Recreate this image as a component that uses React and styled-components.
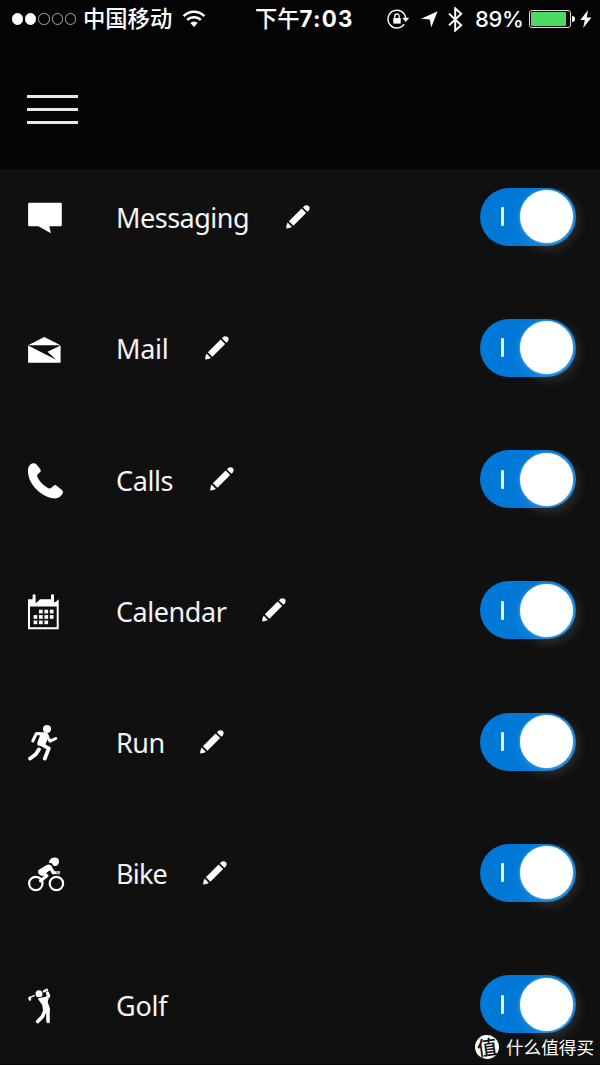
import React from "react";
import styled, { createGlobalStyle } from "styled-components";

const tiles = [
  { name: "Messaging", width: 133, spacing: -0.5, icon: <MessageIcon /> },
  { name: "Mail", width: 52, spacing: -0.3, icon: <MailIcon /> },
  { name: "Calls", width: 57, spacing: -0.4, icon: <PhoneIcon /> },
  { name: "Calendar", width: 109, spacing: -0.45, icon: <CalendarIcon /> },
  { name: "Run", width: 47, spacing: -0.5, icon: <RunIcon /> },
  { name: "Bike", width: 50, spacing: -0.8, icon: <BikeIcon /> },
  { name: "Golf", width: 52, spacing: -0.2, icon: <GolfIcon />, fixed: true },
];

function App() {
  return (
    <StPage>
      <GlobalStyle />
      <StHeader>
        <StatusBar />
        <StMenuBtn aria-label="menu">
          <StMenuLine />
          <StMenuLine />
          <StMenuLine />
        </StMenuBtn>
      </StHeader>
      <StList>
        {tiles.map((tile) => {
          return (
            <StRow key={tile.name}>
              {tile.icon}
              <StLabel $width={tile.width} $spacing={tile.spacing}>
                {tile.name}
              </StLabel>
              {!tile.fixed && <PencilIcon />}
              <StToggle role="switch" aria-checked="true">
                <StToggleBar />
                <StKnob />
              </StToggle>
            </StRow>
          );
        })}
      </StList>
      <StWatermark>
        <StBadge>值</StBadge>
        什么值得买
      </StWatermark>
    </StPage>
  );
}

export default App;

function StatusBar() {
  return (
    <StStatus>
      <StSignal>
        <StDot $on />
        <StDot $on />
        <StDot />
        <StDot />
        <StDot />
      </StSignal>
      <StCarrier>中国移动</StCarrier>
      <StWifi viewBox="0 0 24 18">
        <path d="M1.6 6.2a14.6 14.6 0 0 1 20.8 0" />
        <path d="M5.2 10a9.5 9.5 0 0 1 13.6 0" />
        <path d="M8.3 13a5.3 5.3 0 0 1 7.4 0L12 17z" fill="#fff" stroke="none" />
      </StWifi>
      <StTime>
        下午<StClock>7:03</StClock>
      </StTime>
      <StStatusIcons>
        <svg width="23" height="20" viewBox="0 0 23 20" fill="none">
          <path d="M17.2 15.2A8.9 8.9 0 1 1 18.7 9" stroke="#fff" strokeWidth="1.4" />
          <path d="M15.2 8.8h7l-3.5 4.2z" fill="#fff" />
          <path d="M6.3 9h7.4v5.6H6.3z" fill="#fff" />
          <path d="M7.8 9V7.2a2.2 2.2 0 0 1 4.4 0V9" stroke="#fff" strokeWidth="1.3" />
        </svg>
        <svg width="17" height="17" viewBox="0 0 17 17">
          <path d="M16.6.3 10.2 16.6 8.8 8.6.2 7.8z" fill="#fff" />
        </svg>
        <svg width="15" height="25" viewBox="0 0 15 25" fill="none">
          <path d="m1 6.6 12.2 11.6-6 5.4V1.4l6 5.4L1 18.4" stroke="#fff" strokeWidth="2" />
        </svg>
      </StStatusIcons>
      <StPercent>89%</StPercent>
      <StBattery>
        <StCharge />
      </StBattery>
      <StBatteryTip />
      <svg width="12" height="18" viewBox="0 0 12 18">
        <path d="M8 0 .4 10h4.4L3.2 18 11.4 7.4H6.8z" fill="#fff" />
      </svg>
    </StStatus>
  );
}

function PencilIcon() {
  return (
    <StPencil viewBox="0 0 24 24">
      <path d="m15.6 3.6 4.5 4.5L7.4 20.8l-4.5-4.5z" />
      <path d="m17 2.4 1.2-1.3q1-.9 2.5-.7h1q1.8.3 1.9 2.2 0 2-.8 2.8l-1.4 1.4z" />
      <path d="m1.6 17.6 4.3 4.3-2.6 1.1-3.1.6.3-3.1z" />
    </StPencil>
  );
}

function MessageIcon() {
  return (
    <StIcon viewBox="0 0 40 40">
      <path d="M1.5 5.7h31q1.3 0 1.3 1.4v20.8q0 1.4-1.3 1.4H21.3l1.6 6.9-12.6-6.9H1.5Q.1 29.3.1 27.9V7.1q0-1.4 1.4-1.4z" />
    </StIcon>
  );
}

function MailIcon() {
  return (
    <StIcon viewBox="0 0 40 40">
      <path d="M.1 17.2 16.3 9l16.3 8.2z" />
      <path d="M.1 17.6 28.2 31.8l-8.7-8 13.1-6.4v17.4H.1z" />
    </StIcon>
  );
}

function PhoneIcon() {
  return (
    <StIcon viewBox="0 0 40 40">
      <path d="M5.3 3.2q1.7-.3 3.2 1.4l3.7 4.5q1.2 1.5.1 2.8l-2.1 1.8q-1.7 1.3-.9 3.1c2 4.4 5.7 8.5 10.2 11 1.7.9 2.9.8 4.1-.3l2-1.8q1.5-1.2 3 0l5.4 4.3q1.5 1.3.8 3-2.4 5.4-7.8 5.4C14.8 38.4 0 24.8 0 11.3 0 7 1.4 3.8 5.3 3.2z" />
    </StIcon>
  );
}

function CalendarIcon() {
  const dots = [
    [11, 18.7], [16.4, 18.7], [21.8, 18.7],
    [5.6, 24.1], [11, 24.1], [16.4, 24.1], [21.8, 24.1],
    [5.6, 29.5], [11, 29.5], [16.4, 29.5],
  ];
  return (
    <StIcon viewBox="0 0 40 40">
      <path
        fillRule="evenodd"
        d="M0 8.3h4.6V4.5q0-1.2 1.5-1.2t1.5 1.2v7.3h.8l3.7-3.5H23V4.5q0-1.2 1.5-1.2T26 4.5v6.7l1.6-.3 3.1-2.6v30H0zM2 15.5v20.7h26.7V15.5z"
      />
      {dots.map(([x, y]) => (
        <rect key={x + "-" + y} x={x} y={y} width="3.7" height="3.7" />
      ))}
    </StIcon>
  );
}

function RunIcon() {
  return (
    <StIcon viewBox="0 0 40 40">
      <circle cx="19" cy="7" r="4" />
      <path d="M7.5 10.2h9.8q3 .6 3.6 3.6l-3 7.4-1 3-7.2-.6q-1.2-2 .1-4.3l2.3-5.8z" />
      <StLimb $w={3} d="M12 11.8H8.2L4.8 19M18.5 13.2l3.6 6 5.7-2.7" />
      <StLimb $w={3.8} d="m13.5 22.4 7.3 4-4 10.2M11 27.4l-3.2 4.9-5.7 4.2" />
    </StIcon>
  );
}

function BikeIcon() {
  return (
    <StIcon viewBox="0 0 40 40">
      <StLimb $w={2.2} d="M14.5 30.5a6.7 6.7 0 1 1-13.4 0 6.7 6.7 0 1 1 13.4 0zM35.1 30.5a6.7 6.7 0 1 1-13.4 0 6.7 6.7 0 1 1 13.4 0z" />
      <path d="M20.8 9.5C21.6 5.4 25 4 28.2 4.7q3 .8 2.8 3.7c-.1 3-1.8 4.8-4 4.6-1.6 0-2.4-1.2-2.8-2.6z" />
      <path d="m10.2 17.3 8.4-5.2q3-1.6 5 1.1l.7 2.2-6 4.7-4.3 2.8q-4.8-1.5-3.8-5.6z" />
      <StLimb $w={3.4} d="m22 14 3.3 5.6h1.4M13 19.5l5.8 3.2-6.2 5" />
      <path d="M28.4 18h1.2v3.2h-1.2zM30.3 18h1.4v3.2h-1.4z" />
    </StIcon>
  );
}

function GolfIcon() {
  return (
    <StIcon viewBox="0 0 40 40">
      <circle cx="11" cy="8.8" r="3.5" />
      <StLimb $w={1.4} d="m1.7 12.7 4.5-2" />
      <StLimb $w={2.6} d="m1.5 12.9.4 1.5" />
      <StLimb $w={2.3} d="m16 6.3 3-1.6" />
      <StLimb $w={3.2} d="m19.5 8 1.2 3-3.5 3.2" />
      <path d="M9.7 13.5 16 12l4.6 1.6-.9 3.3 2.2 6.5-.2 3.1-4.3 1-2.4-2.5-.8-5z" />
      <StLimb $w={3.6} d="m19.8 24.5.3 12M17 25.5l-2.5 6-4.8 5" />
    </StIcon>
  );
}

const GlobalStyle = createGlobalStyle`
  body {
    margin: 0;
    background: #101010;
  }

  * {
    box-sizing: border-box;
  }
`;

const StPage = styled.div`
  position: relative;
  width: 600px;
  height: 1065px;
  overflow: hidden;
  color: #fff;
  background: #101010;
  border-bottom: 1px solid #050505;
  font-family: "Noto Sans", "Noto Sans CJK SC", sans-serif;
`;

const StHeader = styled.header`
  height: 169px;
  background: #040404;
`;

const StStatus = styled.div`
  display: flex;
  align-items: center;
  height: 38px;
  padding-left: 12px;
  font-family: Inter, "Noto Sans CJK SC", sans-serif;
  font-size: 22px;
  line-height: 38px;
  white-space: nowrap;

  svg {
    flex: none;
  }
`;

const StSignal = styled.div`
  display: flex;
  gap: 2px;
  width: 71px;
`;

const StDot = styled.span`
  width: 11.2px;
  height: 11.2px;
  border: 1px solid ${(props) => (props.$on ? "#fff" : "#aaa")};
  border-radius: 50%;
  background: ${(props) => (props.$on ? "#fff" : "transparent")};
`;

const StCarrier = styled.span`
  width: 99px;
  font-weight: 500;
  font-size: 22.3px;
`;

const StWifi = styled.svg`
  width: 24px;
  height: 18px;
  fill: none;
  stroke: #fff;
  stroke-width: 2.5;
`;

const StTime = styled.span`
  width: 98px;
  margin-left: 49px;
  font-weight: 500;
  font-size: 22.3px;
`;

const StClock = styled.span`
  font-weight: 700;
  letter-spacing: 1.2px;
`;

const StStatusIcons = styled.div`
  display: flex;
  align-items: center;
  gap: 10.5px;
  width: 88px;
  margin-left: 34px;
`;

const StPercent = styled.span`
  width: 54px;
  font-weight: 500;
  letter-spacing: -0.3px;
`;

const StBattery = styled.div`
  width: 42px;
  height: 18px;
  padding: 1px;
  border: 1px solid #ddd;
  border-radius: 3px;
`;

const StCharge = styled.div`
  width: 35px;
  height: 14px;
  border-radius: 1px;
  background: #4cd964;
`;

const StBatteryTip = styled.div`
  width: 3px;
  height: 6px;
  margin: 0 5px 0 1px;
  border-radius: 0 3px 3px 0;
  background: #fff;
`;

const StMenuBtn = styled.button`
  display: flex;
  flex-direction: column;
  gap: 10px;
  width: 51px;
  margin: 57px 0 0 27px;
  padding: 0;
  border: none;
  background: none;
`;

const StMenuLine = styled.span`
  height: 3px;
  background: #e8e8e8;
`;

const StList = styled.div`
  display: grid;
  grid-auto-rows: 131.25px;
  padding: 18.6px 24px 0 28px;
`;

const StRow = styled.div`
  display: flex;
  align-items: center;
  height: 58px;
`;

const StIcon = styled.svg`
  flex: none;
  width: 40px;
  height: 40px;
  margin: 1px 48px 0 0;
  fill: #fff;
`;

const StLimb = styled.path`
  fill: none;
  stroke: #fff;
  stroke-width: ${(props) => props.$w};
  stroke-linecap: round;
  stroke-linejoin: round;
`;

const StLabel = styled.span`
  width: ${(props) => props.$width}px;
  margin-right: 37px;
  padding-top: 3px;
  color: #f4f4f4;
  font-size: 27px;
  line-height: 38px;
  letter-spacing: ${(props) => props.$spacing}px;
  white-space: nowrap;
`;

const StPencil = styled.svg`
  flex: none;
  width: 24px;
  height: 24px;
  fill: #fff;
`;

const StToggle = styled.div`
  display: flex;
  align-items: center;
  width: 96px;
  height: 58px;
  margin-left: auto;
  padding-left: 20.6px;
  border-radius: 29px;
  background: #0078d7;
`;

const StToggleBar = styled.span`
  width: 3px;
  height: 19px;
  border-radius: 1px;
  background: #e4f1fb;
`;

const StKnob = styled.span`
  width: 53px;
  height: 53px;
  margin-left: 16.4px;
  border-radius: 50%;
  background: #fff;
  box-shadow: 0 0 2px rgba(255, 255, 255, 0.6), 3px 4px 14px rgba(255, 255, 255, 0.18);
`;

const StWatermark = styled.div`
  position: absolute;
  left: 475px;
  top: 1035px;
  display: flex;
  align-items: center;
  gap: 7px;
  height: 24px;
  font-family: "Noto Sans CJK SC", sans-serif;
  font-size: 17.6px;
  line-height: 24px;
  white-space: nowrap;
`;

const StBadge = styled.span`
  width: 24px;
  height: 24px;
  border-radius: 50%;
  color: #111;
  background: #fff;
  font-size: 20px;
  font-weight: 500;
  line-height: 23px;
  text-align: center;
  transform: rotate(-8deg);
`;
